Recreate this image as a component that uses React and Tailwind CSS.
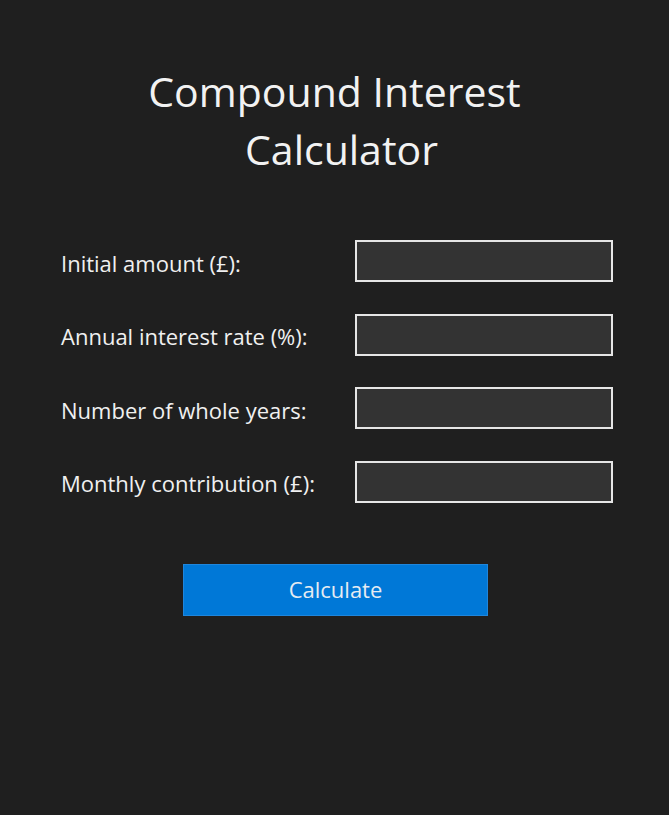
export default function App() {
  const rows = [
    "Initial amount (£):",
    "Annual interest rate (%):",
    "Number of whole years:",
    "Monthly contribution (£):",
  ];
  return (
    <div className="w-[669px] h-[815px] bg-[#1f1f1f] text-[#f0f0f0]" style={{ fontFamily: '"Open Sans", "Noto Sans", sans-serif' }}>
      <div className="pt-[62px] text-center text-[41px] leading-[58px] text-[#f2f2f2]">
        <div>Compound Interest</div>
        <div className="pl-[14px]">Calculator</div>
      </div>
      <div className="mt-[62px] pl-[61px] grid grid-cols-[294px_258px] gap-y-[31.67px]">
        {rows.map((r) => (
          <div key={r} className="contents">
            <div className="flex items-center h-[42px] pt-[4px] text-[22px] text-[#f0f0f0] whitespace-nowrap">{r}</div>
            <div className="h-[42px] border-2 border-[#e6e6e6] bg-[#333333]" />
          </div>
        ))}
      </div>
      <div className="mt-[61px] flex pl-[183px]">
        <button className="w-[305px] h-[52px] bg-[#0078d7] border border-[#1f86dc] text-[22px] text-[#e6ecf2]">
          Calculate
        </button>
      </div>
    </div>
  );
}
